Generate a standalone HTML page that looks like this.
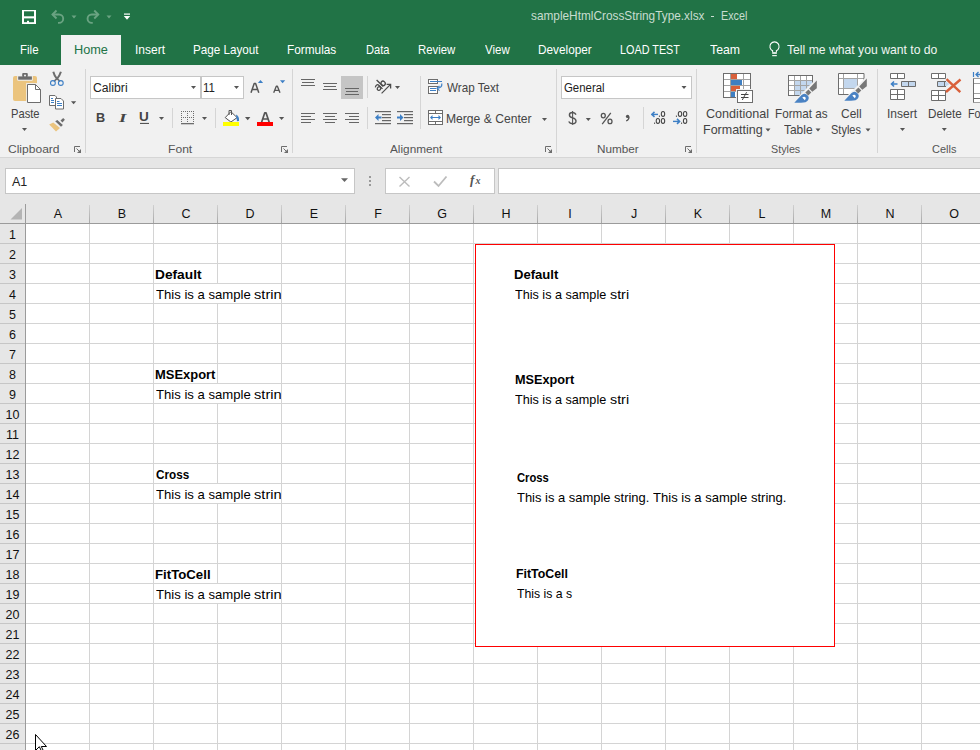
<!DOCTYPE html>
<html><head><meta charset="utf-8">
<style>
*{margin:0;padding:0;box-sizing:border-box}
html,body{width:980px;height:750px;overflow:hidden;background:#fff;font-family:"Liberation Sans",sans-serif}
.a{position:absolute}
.t{position:absolute;white-space:nowrap;line-height:1}
svg{position:absolute;overflow:visible}
</style></head><body>
<div class="a" style="left:0;top:0;width:980px;height:65px;background:#217346"></div>
<div class="a" style="left:61px;top:35px;width:60px;height:30px;background:#f1f1f1"></div>
<svg style="left:0;top:0" width="140" height="35">
<rect x="22" y="10" width="2" height="14" fill="#fff"/><rect x="34" y="10" width="2" height="14" fill="#fff"/><rect x="22" y="10" width="14" height="1.3" fill="#fff"/><rect x="22" y="22.2" width="14" height="1.8" fill="#fff"/>
<rect x="22" y="16.3" width="14" height="2.1" fill="#fff"/>
<rect x="27" y="20.8" width="2" height="2.5" fill="#fff"/>
<g id="undo" fill="none" stroke="#6aa382" stroke-width="1.9">
<path d="M52.5 14.5h6.5a4.2 4.2 0 0 1 0 8.4h-1"/>
<path d="M56.5 10.5l-4 4l4 4"/>
</g>
<g transform="translate(150.75 0) scale(-1 1)" fill="none" stroke="#6aa382" stroke-width="1.9">
<path d="M52.5 14.5h6.5a4.2 4.2 0 0 1 0 8.4h-1"/>
<path d="M56.5 10.5l-4 4l4 4"/>
</g>
<path d="M71.5 15.5h5l-2.5 3z" fill="#6aa382"/>
<path d="M106.5 15.5h5l-2.5 3z" fill="#6aa382"/>
<rect x="124" y="13.5" width="6" height="1.2" fill="#fff"/>
<path d="M123.8 16h6.4l-3.2 3.8z" fill="#fff"/>
</svg>
<div class="t" style="left:531.29px;top:9.00px;font-size:13px;color:#c8ddd0;font-weight:400;font-family:'Liberation Sans';transform:scaleX(0.9095);transform-origin:0 0;">sampleHtmlCrossStringType.xlsx</div>
<div class="a" style="left:710.8px;top:15.5px;width:3.4px;height:1.1px;background:#c8ddd0"></div>
<div class="t" style="left:721.07px;top:9.00px;font-size:13px;color:#c8ddd0;font-weight:400;font-family:'Liberation Sans';transform:scaleX(0.8267);transform-origin:0 0;">Excel</div>
<div class="t" style="left:19.72px;top:43.00px;font-size:13px;color:#fff;font-weight:400;font-family:'Liberation Sans';transform:scaleX(0.8850);transform-origin:0 0;">File</div>
<div class="t" style="left:73.72px;top:43.00px;font-size:13px;color:#217346;font-weight:400;font-family:'Liberation Sans';transform:scaleX(0.9788);transform-origin:0 0;">Home</div>
<div class="t" style="left:134.58px;top:43.00px;font-size:13px;color:#fff;font-weight:400;font-family:'Liberation Sans';transform:scaleX(0.9219);transform-origin:0 0;">Insert</div>
<div class="t" style="left:193.30px;top:43.00px;font-size:13px;color:#fff;font-weight:400;font-family:'Liberation Sans';transform:scaleX(0.8986);transform-origin:0 0;">Page Layout</div>
<div class="t" style="left:287.49px;top:43.00px;font-size:13px;color:#fff;font-weight:400;font-family:'Liberation Sans';transform:scaleX(0.9094);transform-origin:0 0;">Formulas</div>
<div class="t" style="left:365.54px;top:43.00px;font-size:13px;color:#fff;font-weight:400;font-family:'Liberation Sans';transform:scaleX(0.8556);transform-origin:0 0;">Data</div>
<div class="t" style="left:418.13px;top:43.00px;font-size:13px;color:#fff;font-weight:400;font-family:'Liberation Sans';transform:scaleX(0.8738);transform-origin:0 0;">Review</div>
<div class="t" style="left:484.80px;top:43.00px;font-size:13px;color:#fff;font-weight:400;font-family:'Liberation Sans';transform:scaleX(0.8857);transform-origin:0 0;">View</div>
<div class="t" style="left:538.39px;top:43.00px;font-size:13px;color:#fff;font-weight:400;font-family:'Liberation Sans';transform:scaleX(0.9069);transform-origin:0 0;">Developer</div>
<div class="t" style="left:620.17px;top:43.00px;font-size:13px;color:#fff;font-weight:400;font-family:'Liberation Sans';transform:scaleX(0.8324);transform-origin:0 0;">LOAD TEST</div>
<div class="t" style="left:710.20px;top:43.00px;font-size:13px;color:#fff;font-weight:400;font-family:'Liberation Sans';transform:scaleX(0.9452);transform-origin:0 0;">Team</div>
<svg style="left:0;top:0" width="980" height="65">
<path d="M772.6 52.3v-1.6a4.6 4.6 0 1 1 3.8 0v1.6" fill="none" stroke="#fff" stroke-width="1.1"/><rect x="772.2" y="52.2" width="4.6" height="1.6" fill="#fff"/><rect x="772.2" y="55.1" width="4.6" height="1.1" fill="#fff"/>
</svg>
<div class="t" style="left:786.70px;top:43.00px;font-size:13px;color:#f0f5f2;font-weight:400;font-family:'Liberation Sans';transform:scaleX(0.9375);transform-origin:0 0;">Tell me what you want to do</div>
<div class="a" style="left:0;top:65px;width:980px;height:92px;background:#f1f1f1"></div>
<div class="a" style="left:0;top:157px;width:980px;height:1px;background:#d6d6d6"></div>
<div class="a" style="left:85px;top:69px;width:1px;height:84px;background:#d5d5d5"></div>
<div class="a" style="left:292px;top:69px;width:1px;height:84px;background:#d5d5d5"></div>
<div class="a" style="left:556px;top:69px;width:1px;height:84px;background:#d5d5d5"></div>
<div class="a" style="left:696px;top:69px;width:1px;height:84px;background:#d5d5d5"></div>
<div class="a" style="left:877px;top:69px;width:1px;height:84px;background:#d5d5d5"></div>
<div class="t" style="left:8.28px;top:144.00px;font-size:11.8px;color:#555;font-weight:400;font-family:'Liberation Sans';transform:scaleX(1.0204);transform-origin:0 0;">Clipboard</div>
<div class="t" style="left:168.17px;top:144.00px;font-size:11.8px;color:#555;font-weight:400;font-family:'Liberation Sans';transform:scaleX(1.0261);transform-origin:0 0;">Font</div>
<div class="t" style="left:390.20px;top:144.00px;font-size:11.8px;color:#555;font-weight:400;font-family:'Liberation Sans';transform:scaleX(0.9981);transform-origin:0 0;">Alignment</div>
<div class="t" style="left:597.40px;top:144.00px;font-size:11.8px;color:#555;font-weight:400;font-family:'Liberation Sans';transform:scaleX(0.9951);transform-origin:0 0;">Number</div>
<div class="t" style="left:771.09px;top:144.00px;font-size:11.8px;color:#555;font-weight:400;font-family:'Liberation Sans';transform:scaleX(0.9097);transform-origin:0 0;">Styles</div>
<div class="t" style="left:932.07px;top:144.00px;font-size:11.8px;color:#555;font-weight:400;font-family:'Liberation Sans';transform:scaleX(0.9320);transform-origin:0 0;">Cells</div>
<div class="t" style="left:10.64px;top:107.00px;font-size:13px;color:#444;font-weight:400;font-family:'Liberation Sans';transform:scaleX(0.8594);transform-origin:0 0;">Paste</div>
<div class="a" style="left:90px;top:76px;width:111px;height:23px;background:#fff;border:1px solid #c6c6c6"></div>
<div class="a" style="left:201px;top:76px;width:43px;height:23px;background:#fff;border:1px solid #c6c6c6"></div>
<div class="t" style="left:92.62px;top:82.00px;font-size:12.5px;color:#222;font-weight:400;font-family:'Liberation Sans';transform:scaleX(0.9765);transform-origin:0 0;">Calibri</div>
<div class="t" style="left:203.08px;top:82.00px;font-size:12.5px;color:#222;font-weight:400;font-family:'Liberation Sans';transform:scaleX(0.9167);transform-origin:0 0;">11</div>
<div class="t" style="left:95.76px;top:111.00px;font-size:13.5px;color:#444;font-weight:700;font-family:'Liberation Sans';transform:scaleX(0.9375);transform-origin:0 0;">B</div>
<div class="t" style="left:119.00px;top:111.00px;font-size:13.5px;color:#444;font-weight:700;font-family:'Liberation Serif';transform:scaleX(1.4000);transform-origin:0 0;"><i>I</i></div>
<div class="t" style="left:139.31px;top:111.00px;font-size:12.5px;color:#444;font-weight:700;font-family:'Liberation Sans';transform:scaleX(1.0857);transform-origin:0 0;">U</div>
<svg style="left:0;top:0" width="980" height="160"><path d="M74.5 152v-5.5h5.5" fill="none" stroke="#6d6d6d" stroke-width="1"/><path d="M81 149v4h-4z" fill="#6d6d6d"/><path d="M76.5 148.5l3 3" stroke="#6d6d6d" stroke-width="1"/>
<path d="M281.5 152v-5.5h5.5" fill="none" stroke="#6d6d6d" stroke-width="1"/><path d="M288 149v4h-4z" fill="#6d6d6d"/><path d="M283.5 148.5l3 3" stroke="#6d6d6d" stroke-width="1"/>
<path d="M545.5 152v-5.5h5.5" fill="none" stroke="#6d6d6d" stroke-width="1"/><path d="M552 149v4h-4z" fill="#6d6d6d"/><path d="M547.5 148.5l3 3" stroke="#6d6d6d" stroke-width="1"/>
<path d="M685.5 152v-5.5h5.5" fill="none" stroke="#6d6d6d" stroke-width="1"/><path d="M692 149v4h-4z" fill="#6d6d6d"/><path d="M687.5 148.5l3 3" stroke="#6d6d6d" stroke-width="1"/>
<rect x="13" y="76" width="24" height="25" rx="2" fill="#ebc47e"/>
<rect x="17.2" y="72" width="15.6" height="8.8" rx="1" fill="#f1f1f1"/>
<rect x="18.2" y="76.4" width="13.7" height="3.3" fill="#6d6d6d"/>
<rect x="22.2" y="73" width="5.6" height="4" rx="1" fill="#6d6d6d"/>
<circle cx="25" cy="75.4" r="1" fill="#f4f4f4"/>
<rect x="26.2" y="83.1" width="16" height="21" fill="#f1f1f1"/>
<path d="M27.5 84.5H35.5L40.5 89.5V102.5H27.5Z" fill="#fff" stroke="#6d6d6d" stroke-width="1"/>
<path d="M35.5 84.5V89.5H40.5" fill="none" stroke="#6d6d6d" stroke-width="1"/>
<path d="M53.3 71.8q1 4 3.7 7q2.7 -3 3.9 -7" fill="none" stroke="#6d6d6d" stroke-width="2"/>
<path d="M57 78.5l-3 2.8M57 78.5l3 2.8" stroke="#6d6d6d" stroke-width="1.6"/>
<circle cx="52.9" cy="83" r="2.4" fill="none" stroke="#3d7fc5" stroke-width="1.1"/>
<circle cx="60.8" cy="83" r="2.4" fill="none" stroke="#3d7fc5" stroke-width="1.1"/>
<path d="M49.5 95.5h5.5l1.5 1.5v8.5h-7z" fill="#fff" stroke="#6d6d6d" stroke-width="1"/>
<path d="M55.5 98.5h5.5l2.5 2.5v8h-8z" fill="#fff" stroke="#6d6d6d" stroke-width="1"/>
<path d="M51 98.5h2M51 100.5h3M51 102.5h3M57 101.5h2.5M57 103.5h5M57 105.5h5" stroke="#3d7fc5" stroke-width="1"/>
<path d="M49.2 124.4L53.3 122.6L60 127.9L56 131.6Z" fill="#ebc47e"/>
<path d="M55.2 121.2L57.3 120L62.9 124.9L61 126.8Z" fill="#6d6d6d"/>
<path d="M60.5 120.4L63.2 118L64.9 119.7L62.4 122.5Z" fill="#6d6d6d"/>

<path d="M71 101.2h5.2l-2.6 3.12z" fill="#555"/>
<path d="M22 128h5l-2.5 3.0z" fill="#555"/>
<path d="M191 86h5l-2.5 3.0z" fill="#555"/>
<path d="M234 86h5l-2.5 3.0z" fill="#555"/>
<path d="M251 92.8L254.2 83.6H255.6L258.8 92.8M252.5 89.6h4.8" fill="none" stroke="#555" stroke-width="1.5" stroke-linejoin="round"/>
<path d="M273.7 92.7L276.3 86.2H277.4L280 92.7M274.9 90.3h4" fill="none" stroke="#555" stroke-width="1.35" stroke-linejoin="round"/>
<path d="M257.9 82.9h5.2l-2.6 -2.9z" fill="#3d7fc5"/><path d="M280 80.3h5.2l-2.6 3z" fill="#3d7fc5"/>
<rect x="140" y="122.9" width="9" height="1" fill="#444"/>
<path d="M159 117h5l-2.5 3.0z" fill="#555"/>
<rect x="172" y="108" width="1" height="20" fill="#d5d5d5"/><rect x="215" y="108" width="1" height="20" fill="#d5d5d5"/>
<g fill="#6d6d6d"><rect x="181" y="111" width="1" height="1"/><rect x="183" y="111" width="1" height="1"/><rect x="185" y="111" width="1" height="1"/><rect x="187" y="111" width="1" height="1"/><rect x="189" y="111" width="1" height="1"/><rect x="191" y="111" width="1" height="1"/><rect x="193" y="111" width="1" height="1"/><rect x="181" y="113" width="1" height="1"/><rect x="187" y="113" width="1" height="1"/><rect x="193" y="113" width="1" height="1"/><rect x="181" y="115" width="1" height="1"/><rect x="187" y="115" width="1" height="1"/><rect x="193" y="115" width="1" height="1"/><rect x="181" y="117" width="1" height="1"/><rect x="183" y="117" width="1" height="1"/><rect x="185" y="117" width="1" height="1"/><rect x="187" y="117" width="1" height="1"/><rect x="189" y="117" width="1" height="1"/><rect x="191" y="117" width="1" height="1"/><rect x="193" y="117" width="1" height="1"/><rect x="181" y="119" width="1" height="1"/><rect x="187" y="119" width="1" height="1"/><rect x="193" y="119" width="1" height="1"/><rect x="181" y="121" width="1" height="1"/><rect x="187" y="121" width="1" height="1"/><rect x="193" y="121" width="1" height="1"/></g><rect x="181" y="123" width="13" height="1.3" fill="#6d6d6d"/>
<path d="M202 117h5l-2.5 3.0z" fill="#555"/>
<path d="M225.2 117.6l5.7 -5.9l6.2 5.9l-6.2 4.4z" fill="#fff" stroke="#555" stroke-width="1"/><path d="M229 115v-4.5h2.5v4.5" fill="none" stroke="#555" stroke-width="1"/><path d="M236 114.5q3.5 1.5 3 6.5l-2 0.3z" fill="#3d7fc5"/>
<rect x="223" y="122" width="16" height="4" fill="#ffff00"/>
<path d="M245 117h5.4l-2.7 3.24z" fill="#555"/>
<path d="M261.6 122.3L264.7 112.9H266.1L269.2 122.3M262.9 119h5" fill="none" stroke="#555" stroke-width="1.7" stroke-linejoin="round"/>
<rect x="257" y="122" width="16" height="4" fill="#ff0000"/>
<path d="M279 117h5.2l-2.6 3.12z" fill="#555"/></svg>
<div class="t" style="left:447.40px;top:82.00px;font-size:12.8px;color:#444;font-weight:400;font-family:'Liberation Sans';transform:scaleX(0.9105);transform-origin:0 0;">Wrap Text</div>
<div class="t" style="left:446.45px;top:113.00px;font-size:12.8px;color:#444;font-weight:400;font-family:'Liberation Sans';transform:scaleX(0.9472);transform-origin:0 0;">Merge &amp; Center</div>
<div class="a" style="left:561px;top:76px;width:131px;height:23px;background:#fff;border:1px solid #c6c6c6"></div>
<div class="t" style="left:563.59px;top:82.00px;font-size:12.5px;color:#222;font-weight:400;font-family:'Liberation Sans';transform:scaleX(0.9116);transform-origin:0 0;">General</div>
<div class="t" style="left:705.72px;top:108.00px;font-size:12.8px;color:#444;font-weight:400;font-family:'Liberation Sans';transform:scaleX(0.9839);transform-origin:0 0;">Conditional</div>
<div class="t" style="left:702.72px;top:124.00px;font-size:12.8px;color:#444;font-weight:400;font-family:'Liberation Sans';transform:scaleX(0.9763);transform-origin:0 0;">Formatting</div>
<div class="t" style="left:774.69px;top:108.00px;font-size:12.8px;color:#444;font-weight:400;font-family:'Liberation Sans';transform:scaleX(0.9125);transform-origin:0 0;">Format as</div>
<div class="t" style="left:784.00px;top:124.00px;font-size:12.8px;color:#444;font-weight:400;font-family:'Liberation Sans';transform:scaleX(0.9333);transform-origin:0 0;">Table</div>
<div class="t" style="left:840.67px;top:108.00px;font-size:12.8px;color:#444;font-weight:400;font-family:'Liberation Sans';transform:scaleX(0.9350);transform-origin:0 0;">Cell</div>
<div class="t" style="left:831.44px;top:124.00px;font-size:12.8px;color:#444;font-weight:400;font-family:'Liberation Sans';transform:scaleX(0.8588);transform-origin:0 0;">Styles</div>
<div class="t" style="left:886.76px;top:108.00px;font-size:12.8px;color:#444;font-weight:400;font-family:'Liberation Sans';transform:scaleX(0.9387);transform-origin:0 0;">Insert</div>
<div class="t" style="left:927.89px;top:108.00px;font-size:12.8px;color:#444;font-weight:400;font-family:'Liberation Sans';transform:scaleX(0.9143);transform-origin:0 0;">Delete</div>
<div class="t" style="left:967.56px;top:108.00px;font-size:12.8px;color:#444;font-weight:400;font-family:'Liberation Sans';transform:scaleX(0.8400);transform-origin:0 0;">Format</div>
<svg style="left:0;top:0" width="980" height="160"><rect x="301" y="79" width="14" height="1" fill="#666"/><rect x="302" y="82" width="12" height="1" fill="#666"/><rect x="301" y="85" width="14" height="1" fill="#666"/>
<rect x="323" y="83" width="14" height="1" fill="#666"/><rect x="324" y="86" width="12" height="1" fill="#666"/><rect x="323" y="89" width="14" height="1" fill="#666"/>
<rect x="341" y="76" width="22" height="23" fill="#c5c5c5"/>
<rect x="345" y="88" width="14" height="1" fill="#666"/><rect x="346" y="91" width="12" height="1" fill="#666"/><rect x="345" y="94" width="14" height="1" fill="#666"/>
<rect x="367" y="76" width="1" height="22" fill="#d5d5d5"/><rect x="367" y="107" width="1" height="22" fill="#d5d5d5"/><rect x="420" y="76" width="1" height="53" fill="#d5d5d5"/>
<rect x="301" y="113" width="14" height="1" fill="#666"/>
<rect x="323.0" y="113" width="14" height="1" fill="#666"/>
<rect x="345" y="113" width="14" height="1" fill="#666"/>
<rect x="301" y="116" width="10" height="1" fill="#666"/>
<rect x="325.0" y="116" width="10" height="1" fill="#666"/>
<rect x="349" y="116" width="10" height="1" fill="#666"/>
<rect x="301" y="119" width="14" height="1" fill="#666"/>
<rect x="323.0" y="119" width="14" height="1" fill="#666"/>
<rect x="345" y="119" width="14" height="1" fill="#666"/>
<rect x="301" y="122" width="10" height="1" fill="#666"/>
<rect x="325.0" y="122" width="10" height="1" fill="#666"/>
<rect x="349" y="122" width="10" height="1" fill="#666"/>
<g transform="translate(379.3 84.3) rotate(-45) translate(-6.2 -3.8)" fill="none" stroke="#4a4a4a" stroke-width="1.3"><path d="M1.2 3.2q1.3 -0.8 2.4 -0.8q1.6 0.1 1.6 2v4.9"/><ellipse cx="3" cy="6.6" rx="1.9" ry="1.6"/><path d="M7.4 -1.2v9.4"/><ellipse cx="9.6" cy="5.8" rx="2" ry="2.3"/></g><path d="M381.6 93.4l8.7 -8.7" stroke="#4a4a4a" stroke-width="1.2"/><path d="M386.6 84.4h4v4" fill="none" stroke="#4a4a4a" stroke-width="1.3"/>
<path d="M395 86h5l-2.5 3.0z" fill="#555"/>
<rect x="375" y="111" width="16" height="1.2" fill="#666"/><rect x="375" y="123" width="16" height="1.2" fill="#666"/>
<rect x="382" y="114" width="9" height="1.2" fill="#666"/><rect x="382" y="117" width="9" height="1.2" fill="#666"/><rect x="382" y="120" width="9" height="1.2" fill="#666"/>
<path d="M375 117.5l3.5 -3.5v2.5h3v2h-3v2.5z" fill="#3d7fc5"/>
<rect x="397" y="111" width="16" height="1.2" fill="#666"/><rect x="397" y="123" width="16" height="1.2" fill="#666"/>
<rect x="404" y="114" width="9" height="1.2" fill="#666"/><rect x="404" y="117" width="9" height="1.2" fill="#666"/><rect x="404" y="120" width="9" height="1.2" fill="#666"/>
<path d="M403.5 117.5l-3.5 -3.5v2.5h-3v2h3v2.5z" fill="#3d7fc5"/>
<rect x="428.5" y="79.5" width="9" height="4" fill="#fff" stroke="#6d6d6d" stroke-width="1"/><rect x="428.5" y="86.5" width="9" height="7" fill="#fff" stroke="#6d6d6d" stroke-width="1"/>
<path d="M430 81.5h12M430 88.5h6M430 90.5h6" stroke="#3d7fc5" stroke-width="1"/><path d="M441.8 83.5q0.5 4.5 -4.5 4.8" fill="none" stroke="#3d7fc5" stroke-width="1.2"/><path d="M439.5 86l-2.6 2.3l2.6 2.3" fill="none" stroke="#3d7fc5" stroke-width="1.1"/>
<rect x="428.5" y="110.5" width="14" height="14" fill="#fff" stroke="#6d6d6d" stroke-width="1"/><path d="M428.5 113.5h14M428.5 121.5h14M435.5 110.5v3M435.5 121.5v3" stroke="#6d6d6d" stroke-width="1"/>
<path d="M432 117.5h7" stroke="#3d7fc5" stroke-width="1"/><path d="M430 117.5l2.5 -2.5v5zM441 117.5l-2.5 -2.5v5z" fill="#3d7fc5"/>
<path d="M542 118h5l-2.5 3.0z" fill="#555"/>
<path d="M681.5 86h5l-2.5 3.0z" fill="#555"/>
<path d="M576 114.6q-0.9 -2.1 -3.5 -2.1q-3.1 0 -3.1 2.6q0 2 3.2 2.8q3.4 0.8 3.4 3.1q0 2.7 -3.5 2.7q-2.7 0 -3.8 -2.2" fill="none" stroke="#555" stroke-width="1.4"/><path d="M572.6 110.9v13.9" stroke="#555" stroke-width="1.1"/>
<path d="M585.8 118h5l-2.5 3.0z" fill="#555"/>
<ellipse cx="603.3" cy="115.6" rx="2" ry="2.3" fill="none" stroke="#555" stroke-width="1.3"/><ellipse cx="610" cy="121.4" rx="2" ry="2.3" fill="none" stroke="#555" stroke-width="1.3"/><path d="M610.8 112.9l-8.6 11.2" stroke="#555" stroke-width="1.3"/>
<circle cx="627.6" cy="116.4" r="1.7" fill="#555"/><path d="M629 116.7q0.2 2.8 -2.8 4.3" fill="none" stroke="#555" stroke-width="1.3"/>
<rect x="643" y="107" width="1" height="22" fill="#d5d5d5"/>
<rect x="658.9" y="115.6" width="1.1" height="1.2" fill="#444"/><ellipse cx="663" cy="113.9" rx="1.7" ry="2.45" fill="none" stroke="#444" stroke-width="1.05"/><rect x="654" y="122.6" width="1.1" height="1.2" fill="#444"/><ellipse cx="657.9" cy="120.9" rx="1.7" ry="2.45" fill="none" stroke="#444" stroke-width="1.05"/><ellipse cx="663" cy="120.9" rx="1.7" ry="2.45" fill="none" stroke="#444" stroke-width="1.05"/><path d="M651.5 114.4h6.5" stroke="#3d7fc5" stroke-width="1.4"/><path d="M654.5 111.9l-2.6 2.5l2.6 2.5" fill="none" stroke="#3d7fc5" stroke-width="1.5"/><rect x="675.9" y="115.6" width="1.1" height="1.2" fill="#444"/><ellipse cx="680" cy="113.9" rx="1.7" ry="2.45" fill="none" stroke="#444" stroke-width="1.05"/><ellipse cx="685.1" cy="113.9" rx="1.7" ry="2.45" fill="none" stroke="#444" stroke-width="1.05"/><rect x="681" y="122.6" width="1.1" height="1.2" fill="#444"/><ellipse cx="685.1" cy="120.9" rx="1.7" ry="2.45" fill="none" stroke="#444" stroke-width="1.05"/><path d="M673 121.4h6.5" stroke="#3d7fc5" stroke-width="1.4"/><path d="M677 118.9l2.6 2.5l-2.6 2.5" fill="none" stroke="#3d7fc5" stroke-width="1.5"/>
<rect x="723.5" y="73.5" width="27" height="24" fill="#fff"/><path d="M730.5 73.5v24M743.5 73.5v24M723.5 79.5h27M723.5 85.5h27M723.5 91.5h27" stroke="#a3a3a3" stroke-width="1" fill="none"/><rect x="731" y="74" width="6" height="5" fill="#d9603b"/><rect x="731" y="80" width="11" height="5" fill="#3f7fc2"/><rect x="731" y="86" width="9" height="5" fill="#d9603b"/><rect x="731" y="92" width="4" height="5" fill="#3f7fc2"/><rect x="723.5" y="73.5" width="27" height="24" fill="none" stroke="#6d6d6d" stroke-width="1"/><rect x="736" y="89" width="18" height="15" fill="#f1f1f1"/><rect x="737.5" y="90.5" width="15" height="12" fill="#fff" stroke="#6d6d6d" stroke-width="1"/><path d="M741 94.5h7.5M741 97.5h7.5" stroke="#444" stroke-width="1"/><path d="M746.6 92.2l-4.3 7.8" stroke="#444" stroke-width="1"/>
<path d="M765.5 128.5h5l-2.5 3.0z" fill="#555"/>
<rect x="788.5" y="75.5" width="24" height="20" fill="#fff"/><rect x="795" y="81" width="17" height="14" fill="#c3d7ee"/><path d="M794.5 75.5v20M800.5 75.5v20M806.5 75.5v20M788.5 80.5h24M788.5 85.5h24M788.5 90.5h24" stroke="#a3a3a3" stroke-width="1"/><rect x="788.5" y="75.5" width="24" height="20" fill="none" stroke="#6d6d6d" stroke-width="1"/><g transform="translate(0 0)"><path d="M818.5 79.5l-19 19v-3l16 -16z" fill="#f1f1f1"/><path d="M814 82.5v15h-14.5z" fill="#f1f1f1"/><path d="M816.8 80.5V88.3L812.3 91.8L809.2 88.6Z" fill="#777"/><path d="M808.5 89.5L811.3 92.4L808.2 95.4L805.3 92.5Z" fill="#777"/><path d="M794.3 102.8L801.3 95.3A4.2 4.2 0 0 1 808 100.3Q806.5 102.8 801 102.8Z" fill="#4a82c3"/><path d="M802.3 97.6a2.4 2.4 0 0 1 3.6 0.3l-1 2.3l-1.2 -1.3z" fill="#fff"/></g>
<path d="M815.5 128.5h5l-2.5 3.0z" fill="#555"/>
<rect x="838.5" y="73.5" width="25.5" height="21" fill="#fff"/><rect x="843.5" y="78.5" width="14" height="10" fill="#c3d7ee"/><path d="M843.5 73.5v21M857.5 73.5v15M838.5 78.5h25.5M838.5 88.5h19" stroke="#a3a3a3" stroke-width="1"/><path d="M864 81v-7.5h-25.5v21h10" fill="none" stroke="#6d6d6d" stroke-width="1"/><g transform="translate(50 -2)"><path d="M818.5 79.5l-19 19v-3l16 -16z" fill="#f1f1f1"/><path d="M814 82.5v15h-14.5z" fill="#f1f1f1"/><path d="M816.8 80.5V88.3L812.3 91.8L809.2 88.6Z" fill="#777"/><path d="M808.5 89.5L811.3 92.4L808.2 95.4L805.3 92.5Z" fill="#777"/><path d="M794.3 102.8L801.3 95.3A4.2 4.2 0 0 1 808 100.3Q806.5 102.8 801 102.8Z" fill="#4a82c3"/><path d="M802.3 97.6a2.4 2.4 0 0 1 3.6 0.3l-1 2.3l-1.2 -1.3z" fill="#fff"/></g>
<path d="M865.5 128.5h5l-2.5 3.0z" fill="#555"/>
<path d="M890.5 73.5h14v5h-14zM897.5 73.5v5" fill="#fff" stroke="#6d6d6d" stroke-width="1"/><path d="M901.5 81.5h14v5h-14z" fill="#c3d7ee" stroke="#6d6d6d" stroke-width="1"/><path d="M908.5 81.5v5" stroke="#6d6d6d"/><path d="M897.5 84h-5.5M894 81.5l-2.5 2.5l2.5 2.5" stroke="#3d7fc5" stroke-width="1.6" fill="none"/><path d="M890.5 89.5h14v10h-14zM897.5 89.5v10M890.5 94.5h14" fill="#fff" stroke="#6d6d6d" stroke-width="1"/><path d="M931.5 73.5h14v5h-14zM938.5 73.5v5" fill="#fff" stroke="#6d6d6d" stroke-width="1"/><path d="M945 81l4.5 3l-4.5 3z" fill="#c3d7ee"/><path d="M946 81.5h-8.5v5h8.5" fill="#c3d7ee" stroke="#6d6d6d" stroke-width="1"/><path d="M944.5 81.5v5" stroke="#6d6d6d"/><path d="M931.5 90.5h14v10h-14zM938.5 90.5v10M931.5 95.5h14" fill="#fff" stroke="#6d6d6d" stroke-width="1"/><path d="M946.5 79.2l13.8 13M960.5 79.5l-14.5 12.5" stroke="#d9603b" stroke-width="2.4"/><path d="M973.5 78.5h12v24h-12zM973.5 83.5h12M973.5 93.5h12" fill="#fff" stroke="#a0a0a0" stroke-width="1"/><path d="M973.5 102.5v-24M973.5 98.5h12" fill="none" stroke="#6d6d6d" stroke-width="1"/><path d="M973.5 72v5" stroke="#3d7fc5" stroke-width="1.2"/><path d="M976 74.5h6M978.5 72l-2.5 2.5l2.5 2.5" stroke="#3d7fc5" stroke-width="1.3" fill="none"/>
<path d="M900 128h5l-2.5 3.0z" fill="#555"/>
<path d="M941.8 128h5l-2.5 3.0z" fill="#555"/></svg>
<div class="a" style="left:0;top:158px;width:980px;height:46px;background:#e6e6e6"></div>
<div class="a" style="left:5px;top:168px;width:350px;height:26px;background:#fff;border:1px solid #c6c6c6"></div>
<div class="t" style="left:12.00px;top:176.00px;font-size:12.5px;color:#222;font-weight:400;font-family:'Liberation Sans';">A1</div>
<div class="a" style="left:385px;top:168px;width:110px;height:26px;background:#fff;border:1px solid #c6c6c6"></div>
<div class="a" style="left:498px;top:168px;width:490px;height:26px;background:#fff;border:1px solid #c6c6c6"></div>
<div class="t" style="left:470.00px;top:172.50px;font-size:13px;color:#555;font-weight:700;font-family:'Liberation Serif';"><i>f</i></div>
<div class="t" style="left:475.50px;top:175.53px;font-size:10px;color:#555;font-weight:700;font-family:'Liberation Serif';"><i>x</i></div>
<svg style="left:0;top:0" width="980" height="210"><path d="M341 178.3h7l-3.5 3.6z" fill="#666"/>
<rect x="369" y="176" width="2" height="2" fill="#999"/><rect x="369" y="180" width="2" height="2" fill="#999"/><rect x="369" y="184" width="2" height="2" fill="#999"/>
<path d="M399.5 177l10 9.5M409.5 177l-10 9.5" stroke="#bcbcbc" stroke-width="1.4"/>
<path d="M434 181.5l4.5 4.5l8 -9.5" fill="none" stroke="#bcbcbc" stroke-width="1.8"/></svg>
<div class="a" style="left:0;top:204px;width:980px;height:20px;background:#e6e6e6"></div>
<div class="a" style="left:0;top:204px;width:25px;height:546px;background:#e6e6e6"></div>
<svg style="left:0;top:0" width="980" height="750"><defs><linearGradient id="hg" x1="0" y1="0" x2="0" y2="1"><stop offset="0" stop-color="#d0d0d0"/><stop offset="1" stop-color="#a8a8a8"/></linearGradient></defs><rect x="89" y="224" width="1" height="526" fill="#d4d4d4"/>
<rect x="89" y="205" width="1" height="18" fill="url(#hg)"/>
<rect x="153" y="224" width="1" height="526" fill="#d4d4d4"/>
<rect x="153" y="205" width="1" height="18" fill="url(#hg)"/>
<rect x="217" y="224" width="1" height="526" fill="#d4d4d4"/>
<rect x="217" y="205" width="1" height="18" fill="url(#hg)"/>
<rect x="281" y="224" width="1" height="526" fill="#d4d4d4"/>
<rect x="281" y="205" width="1" height="18" fill="url(#hg)"/>
<rect x="345" y="224" width="1" height="526" fill="#d4d4d4"/>
<rect x="345" y="205" width="1" height="18" fill="url(#hg)"/>
<rect x="409" y="224" width="1" height="526" fill="#d4d4d4"/>
<rect x="409" y="205" width="1" height="18" fill="url(#hg)"/>
<rect x="473" y="224" width="1" height="526" fill="#d4d4d4"/>
<rect x="473" y="205" width="1" height="18" fill="url(#hg)"/>
<rect x="537" y="224" width="1" height="526" fill="#d4d4d4"/>
<rect x="537" y="205" width="1" height="18" fill="url(#hg)"/>
<rect x="601" y="224" width="1" height="526" fill="#d4d4d4"/>
<rect x="601" y="205" width="1" height="18" fill="url(#hg)"/>
<rect x="665" y="224" width="1" height="526" fill="#d4d4d4"/>
<rect x="665" y="205" width="1" height="18" fill="url(#hg)"/>
<rect x="729" y="224" width="1" height="526" fill="#d4d4d4"/>
<rect x="729" y="205" width="1" height="18" fill="url(#hg)"/>
<rect x="793" y="224" width="1" height="526" fill="#d4d4d4"/>
<rect x="793" y="205" width="1" height="18" fill="url(#hg)"/>
<rect x="857" y="224" width="1" height="526" fill="#d4d4d4"/>
<rect x="857" y="205" width="1" height="18" fill="url(#hg)"/>
<rect x="921" y="224" width="1" height="526" fill="#d4d4d4"/>
<rect x="921" y="205" width="1" height="18" fill="url(#hg)"/>
<rect x="985" y="224" width="1" height="526" fill="#d4d4d4"/>
<rect x="985" y="205" width="1" height="18" fill="url(#hg)"/>
<rect x="26" y="243" width="954" height="1" fill="#d4d4d4"/>
<rect x="0" y="243" width="25" height="1" fill="#c6c6c6"/>
<rect x="26" y="263" width="954" height="1" fill="#d4d4d4"/>
<rect x="0" y="263" width="25" height="1" fill="#c6c6c6"/>
<rect x="26" y="283" width="954" height="1" fill="#d4d4d4"/>
<rect x="0" y="283" width="25" height="1" fill="#c6c6c6"/>
<rect x="26" y="303" width="954" height="1" fill="#d4d4d4"/>
<rect x="0" y="303" width="25" height="1" fill="#c6c6c6"/>
<rect x="26" y="323" width="954" height="1" fill="#d4d4d4"/>
<rect x="0" y="323" width="25" height="1" fill="#c6c6c6"/>
<rect x="26" y="343" width="954" height="1" fill="#d4d4d4"/>
<rect x="0" y="343" width="25" height="1" fill="#c6c6c6"/>
<rect x="26" y="363" width="954" height="1" fill="#d4d4d4"/>
<rect x="0" y="363" width="25" height="1" fill="#c6c6c6"/>
<rect x="26" y="383" width="954" height="1" fill="#d4d4d4"/>
<rect x="0" y="383" width="25" height="1" fill="#c6c6c6"/>
<rect x="26" y="403" width="954" height="1" fill="#d4d4d4"/>
<rect x="0" y="403" width="25" height="1" fill="#c6c6c6"/>
<rect x="26" y="423" width="954" height="1" fill="#d4d4d4"/>
<rect x="0" y="423" width="25" height="1" fill="#c6c6c6"/>
<rect x="26" y="443" width="954" height="1" fill="#d4d4d4"/>
<rect x="0" y="443" width="25" height="1" fill="#c6c6c6"/>
<rect x="26" y="463" width="954" height="1" fill="#d4d4d4"/>
<rect x="0" y="463" width="25" height="1" fill="#c6c6c6"/>
<rect x="26" y="483" width="954" height="1" fill="#d4d4d4"/>
<rect x="0" y="483" width="25" height="1" fill="#c6c6c6"/>
<rect x="26" y="503" width="954" height="1" fill="#d4d4d4"/>
<rect x="0" y="503" width="25" height="1" fill="#c6c6c6"/>
<rect x="26" y="523" width="954" height="1" fill="#d4d4d4"/>
<rect x="0" y="523" width="25" height="1" fill="#c6c6c6"/>
<rect x="26" y="543" width="954" height="1" fill="#d4d4d4"/>
<rect x="0" y="543" width="25" height="1" fill="#c6c6c6"/>
<rect x="26" y="563" width="954" height="1" fill="#d4d4d4"/>
<rect x="0" y="563" width="25" height="1" fill="#c6c6c6"/>
<rect x="26" y="583" width="954" height="1" fill="#d4d4d4"/>
<rect x="0" y="583" width="25" height="1" fill="#c6c6c6"/>
<rect x="26" y="603" width="954" height="1" fill="#d4d4d4"/>
<rect x="0" y="603" width="25" height="1" fill="#c6c6c6"/>
<rect x="26" y="623" width="954" height="1" fill="#d4d4d4"/>
<rect x="0" y="623" width="25" height="1" fill="#c6c6c6"/>
<rect x="26" y="643" width="954" height="1" fill="#d4d4d4"/>
<rect x="0" y="643" width="25" height="1" fill="#c6c6c6"/>
<rect x="26" y="663" width="954" height="1" fill="#d4d4d4"/>
<rect x="0" y="663" width="25" height="1" fill="#c6c6c6"/>
<rect x="26" y="683" width="954" height="1" fill="#d4d4d4"/>
<rect x="0" y="683" width="25" height="1" fill="#c6c6c6"/>
<rect x="26" y="703" width="954" height="1" fill="#d4d4d4"/>
<rect x="0" y="703" width="25" height="1" fill="#c6c6c6"/>
<rect x="26" y="723" width="954" height="1" fill="#d4d4d4"/>
<rect x="0" y="723" width="25" height="1" fill="#c6c6c6"/>
<rect x="26" y="743" width="954" height="1" fill="#d4d4d4"/>
<rect x="0" y="743" width="25" height="1" fill="#c6c6c6"/>
<rect x="0" y="223" width="980" height="1" fill="#9b9b9b"/>
<rect x="25" y="204" width="1" height="546" fill="#9b9b9b"/>
<path d="M10.5 219.5h11.5v-11.5z" fill="#b4b4b4"/></svg>
<div class="t" style="left:38px;width:40px;text-align:center;top:208px;font-size:12.5px;color:#111">A</div>
<div class="t" style="left:102px;width:40px;text-align:center;top:208px;font-size:12.5px;color:#111">B</div>
<div class="t" style="left:166px;width:40px;text-align:center;top:208px;font-size:12.5px;color:#111">C</div>
<div class="t" style="left:230px;width:40px;text-align:center;top:208px;font-size:12.5px;color:#111">D</div>
<div class="t" style="left:294px;width:40px;text-align:center;top:208px;font-size:12.5px;color:#111">E</div>
<div class="t" style="left:358px;width:40px;text-align:center;top:208px;font-size:12.5px;color:#111">F</div>
<div class="t" style="left:422px;width:40px;text-align:center;top:208px;font-size:12.5px;color:#111">G</div>
<div class="t" style="left:486px;width:40px;text-align:center;top:208px;font-size:12.5px;color:#111">H</div>
<div class="t" style="left:550px;width:40px;text-align:center;top:208px;font-size:12.5px;color:#111">I</div>
<div class="t" style="left:614px;width:40px;text-align:center;top:208px;font-size:12.5px;color:#111">J</div>
<div class="t" style="left:678px;width:40px;text-align:center;top:208px;font-size:12.5px;color:#111">K</div>
<div class="t" style="left:742px;width:40px;text-align:center;top:208px;font-size:12.5px;color:#111">L</div>
<div class="t" style="left:806px;width:40px;text-align:center;top:208px;font-size:12.5px;color:#111">M</div>
<div class="t" style="left:870px;width:40px;text-align:center;top:208px;font-size:12.5px;color:#111">N</div>
<div class="t" style="left:934px;width:40px;text-align:center;top:208px;font-size:12.5px;color:#111">O</div>
<div class="t" style="left:0;width:25px;text-align:center;top:229px;font-size:12.5px;color:#111">1</div>
<div class="t" style="left:0;width:25px;text-align:center;top:249px;font-size:12.5px;color:#111">2</div>
<div class="t" style="left:0;width:25px;text-align:center;top:269px;font-size:12.5px;color:#111">3</div>
<div class="t" style="left:0;width:25px;text-align:center;top:289px;font-size:12.5px;color:#111">4</div>
<div class="t" style="left:0;width:25px;text-align:center;top:309px;font-size:12.5px;color:#111">5</div>
<div class="t" style="left:0;width:25px;text-align:center;top:329px;font-size:12.5px;color:#111">6</div>
<div class="t" style="left:0;width:25px;text-align:center;top:349px;font-size:12.5px;color:#111">7</div>
<div class="t" style="left:0;width:25px;text-align:center;top:369px;font-size:12.5px;color:#111">8</div>
<div class="t" style="left:0;width:25px;text-align:center;top:389px;font-size:12.5px;color:#111">9</div>
<div class="t" style="left:0;width:25px;text-align:center;top:409px;font-size:12.5px;color:#111">10</div>
<div class="t" style="left:0;width:25px;text-align:center;top:429px;font-size:12.5px;color:#111">11</div>
<div class="t" style="left:0;width:25px;text-align:center;top:449px;font-size:12.5px;color:#111">12</div>
<div class="t" style="left:0;width:25px;text-align:center;top:469px;font-size:12.5px;color:#111">13</div>
<div class="t" style="left:0;width:25px;text-align:center;top:489px;font-size:12.5px;color:#111">14</div>
<div class="t" style="left:0;width:25px;text-align:center;top:509px;font-size:12.5px;color:#111">15</div>
<div class="t" style="left:0;width:25px;text-align:center;top:529px;font-size:12.5px;color:#111">16</div>
<div class="t" style="left:0;width:25px;text-align:center;top:549px;font-size:12.5px;color:#111">17</div>
<div class="t" style="left:0;width:25px;text-align:center;top:569px;font-size:12.5px;color:#111">18</div>
<div class="t" style="left:0;width:25px;text-align:center;top:589px;font-size:12.5px;color:#111">19</div>
<div class="t" style="left:0;width:25px;text-align:center;top:609px;font-size:12.5px;color:#111">20</div>
<div class="t" style="left:0;width:25px;text-align:center;top:629px;font-size:12.5px;color:#111">21</div>
<div class="t" style="left:0;width:25px;text-align:center;top:649px;font-size:12.5px;color:#111">22</div>
<div class="t" style="left:0;width:25px;text-align:center;top:669px;font-size:12.5px;color:#111">23</div>
<div class="t" style="left:0;width:25px;text-align:center;top:689px;font-size:12.5px;color:#111">24</div>
<div class="t" style="left:0;width:25px;text-align:center;top:709px;font-size:12.5px;color:#111">25</div>
<div class="t" style="left:0;width:25px;text-align:center;top:729px;font-size:12.5px;color:#111">26</div>
<div class="a" style="left:154px;top:284px;width:127px;height:19px;background:#fff;overflow:hidden"><div class="t" style="left:2.10px;top:4.00px;font-size:13px;color:#000;font-weight:400;font-family:'Liberation Sans';transform:scaleX(1.0096);transform-origin:0 0;">This is a sample</div><div class="t" style="left:100.17px;top:4.00px;font-size:13px;color:#000;font-weight:400;font-family:'Liberation Sans';transform:scaleX(1.1261);transform-origin:0 0;">strin</div></div>
<div class="a" style="left:154px;top:384px;width:127px;height:19px;background:#fff;overflow:hidden"><div class="t" style="left:2.10px;top:4.00px;font-size:13px;color:#000;font-weight:400;font-family:'Liberation Sans';transform:scaleX(1.0096);transform-origin:0 0;">This is a sample</div><div class="t" style="left:100.17px;top:4.00px;font-size:13px;color:#000;font-weight:400;font-family:'Liberation Sans';transform:scaleX(1.1261);transform-origin:0 0;">strin</div></div>
<div class="a" style="left:154px;top:484px;width:127px;height:19px;background:#fff;overflow:hidden"><div class="t" style="left:2.10px;top:4.00px;font-size:13px;color:#000;font-weight:400;font-family:'Liberation Sans';transform:scaleX(1.0096);transform-origin:0 0;">This is a sample</div><div class="t" style="left:100.17px;top:4.00px;font-size:13px;color:#000;font-weight:400;font-family:'Liberation Sans';transform:scaleX(1.1261);transform-origin:0 0;">strin</div></div>
<div class="a" style="left:154px;top:584px;width:127px;height:19px;background:#fff;overflow:hidden"><div class="t" style="left:2.10px;top:4.00px;font-size:13px;color:#000;font-weight:400;font-family:'Liberation Sans';transform:scaleX(1.0096);transform-origin:0 0;">This is a sample</div><div class="t" style="left:100.17px;top:4.00px;font-size:13px;color:#000;font-weight:400;font-family:'Liberation Sans';transform:scaleX(1.1261);transform-origin:0 0;">strin</div></div>
<div class="t" style="left:155.24px;top:268.00px;font-size:13px;color:#000;font-weight:700;font-family:'Liberation Sans';transform:scaleX(1.0558);transform-origin:0 0;">Default</div>
<div class="t" style="left:155.31px;top:368.00px;font-size:13px;color:#000;font-weight:700;font-family:'Liberation Sans';transform:scaleX(0.9950);transform-origin:0 0;">MSExport</div>
<div class="t" style="left:156.30px;top:468.00px;font-size:13px;color:#000;font-weight:700;font-family:'Liberation Sans';transform:scaleX(0.9028);transform-origin:0 0;">Cross</div>
<div class="t" style="left:155.28px;top:568.00px;font-size:13px;color:#000;font-weight:700;font-family:'Liberation Sans';transform:scaleX(1.0170);transform-origin:0 0;">FitToCell</div>
<div class="a" style="left:475px;top:244px;width:360px;height:403px;background:#fff;border:1px solid #ff0000"></div>
<div class="t" style="left:513.69px;top:268.00px;font-size:13px;color:#000;font-weight:700;font-family:'Liberation Sans';transform:scaleX(1.0070);transform-origin:0 0;">Default</div>
<div class="t" style="left:514.72px;top:373.00px;font-size:13px;color:#000;font-weight:700;font-family:'Liberation Sans';transform:scaleX(0.9767);transform-origin:0 0;">MSExport</div>
<div class="t" style="left:516.80px;top:471.00px;font-size:13px;color:#000;font-weight:700;font-family:'Liberation Sans';transform:scaleX(0.8639);transform-origin:0 0;">Cross</div>
<div class="t" style="left:516.80px;top:491.00px;font-size:13px;color:#000;font-weight:400;font-family:'Liberation Sans';transform:scaleX(0.9955);transform-origin:0 0;">This is a sample string.</div>
<div class="t" style="left:653.20px;top:491.00px;font-size:13px;color:#000;font-weight:400;font-family:'Liberation Sans';transform:scaleX(1.0038);transform-origin:0 0;">This is a sample string.</div>
<div class="t" style="left:515.75px;top:567.00px;font-size:13px;color:#000;font-weight:700;font-family:'Liberation Sans';transform:scaleX(0.9509);transform-origin:0 0;">FitToCell</div>
<div class="t" style="left:514.70px;top:288.00px;font-size:13px;color:#000;font-weight:400;font-family:'Liberation Sans';transform:scaleX(0.9713);transform-origin:0 0;">This is a sample</div>
<div class="t" style="left:609.60px;top:288.00px;font-size:13px;color:#000;font-weight:400;font-family:'Liberation Sans';transform:scaleX(1.1000);transform-origin:0 0;">stri</div>
<div class="t" style="left:515.30px;top:393.00px;font-size:13px;color:#000;font-weight:400;font-family:'Liberation Sans';transform:scaleX(0.9713);transform-origin:0 0;">This is a sample</div>
<div class="t" style="left:610.20px;top:393.00px;font-size:13px;color:#000;font-weight:400;font-family:'Liberation Sans';transform:scaleX(1.1000);transform-origin:0 0;">stri</div>
<div class="t" style="left:516.70px;top:587.00px;font-size:13px;color:#000;font-weight:400;font-family:'Liberation Sans';transform:scaleX(0.9431);transform-origin:0 0;">This is a s</div>
<svg style="left:0;top:0" width="980" height="750"><path d="M35.5 734.5v16l3.8 -3.8l3 6h2l-3 -6.2h5.2z" fill="#fff" stroke="#000" stroke-width="1"/></svg>
</body></html>
